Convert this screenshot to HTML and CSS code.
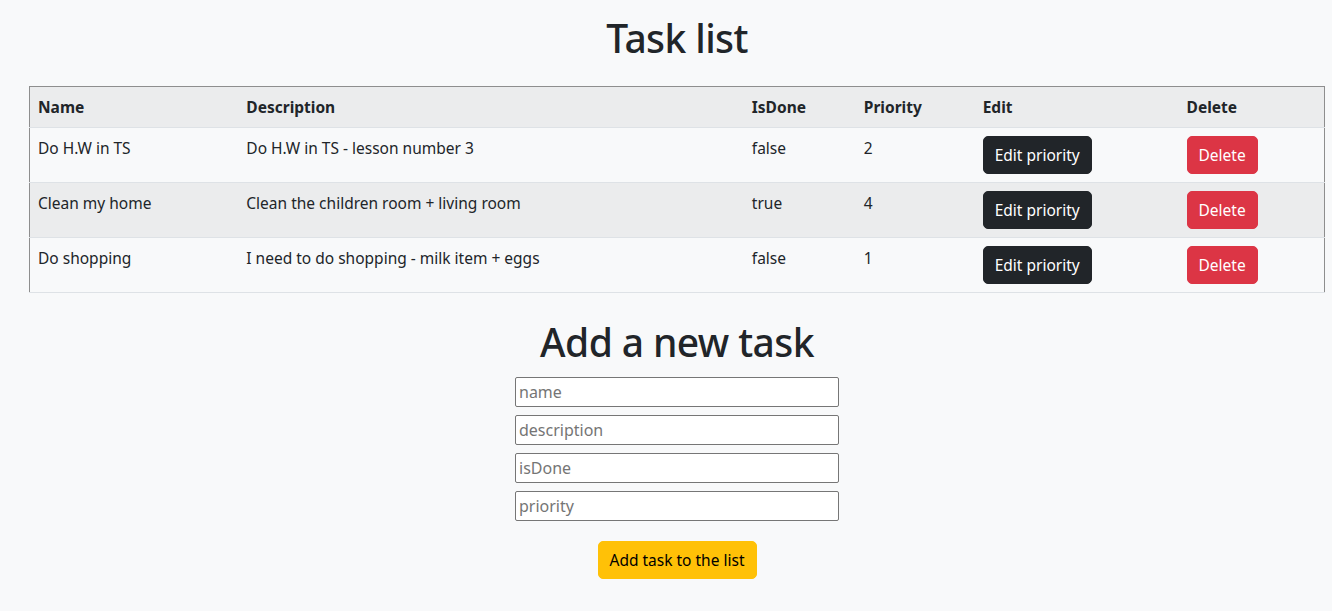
FILE: index.html
```html
<!DOCTYPE html>
<html lang="en">
<head>
<meta charset="utf-8">
<title>Task list</title>
<link rel="stylesheet" href="styles.css">
</head>
<body>
<div class="page">
  <h1 class="title">Task list</h1>
  <table class="tasks">
    <colgroup>
      <col class="c-name"><col class="c-desc"><col class="c-done"><col class="c-prio"><col class="c-edit"><col class="c-del">
    </colgroup>
    <thead>
      <tr><th>Name</th><th>Description</th><th>IsDone</th><th>Priority</th><th>Edit</th><th>Delete</th></tr>
    </thead>
    <tbody>
      <tr>
        <td>Do H.W in TS</td><td>Do H.W in TS - lesson number 3</td><td>false</td><td>2</td>
        <td><button class="btn btn-dark">Edit priority</button></td>
        <td><button class="btn btn-danger">Delete</button></td>
      </tr>
      <tr class="alt">
        <td>Clean my home</td><td>Clean the children room + living room</td><td>true</td><td>4</td>
        <td><button class="btn btn-dark">Edit priority</button></td>
        <td><button class="btn btn-danger">Delete</button></td>
      </tr>
      <tr>
        <td>Do shopping</td><td>I need to do shopping - milk item + eggs</td><td>false</td><td>1</td>
        <td><button class="btn btn-dark">Edit priority</button></td>
        <td><button class="btn btn-danger">Delete</button></td>
      </tr>
    </tbody>
  </table>
  <h1 class="subtitle">Add a new task</h1>
  <form class="add-form">
    <input class="field" type="text" placeholder="name">
    <input class="field" type="text" placeholder="description">
    <input class="field" type="text" placeholder="isDone">
    <input class="field" type="text" placeholder="priority">
    <button type="button" class="btn btn-warning">Add task to the list</button>
  </form>
</div>
</body>
</html>
```
FILE: styles.css
```css
html, body {
  margin: 0;
  background: #f8f9fa;
  color: #212529;
  font-family: "Noto Sans", "Open Sans", sans-serif;
  font-size: 15.5px;
  line-height: 24px;
}

.page {
  padding: 0 7px 20px 29px;
}

.title,
.subtitle {
  font-size: 39px;
  font-weight: 500;
  letter-spacing: -0.6px;
  line-height: 48px;
  text-align: center;
  margin: 0;
}

.title {
  padding-top: 14px;
  margin-bottom: 24px;
}

.subtitle {
  margin-top: 25px;
  margin-bottom: 11px;
}

.tasks {
  width: 1296px;
  border-collapse: collapse;
  border: 1px solid #8e8e8e;
  border-bottom-color: #dee2e6;
  vertical-align: top;
}

.c-name { width: 209px; }
.c-desc { width: 506px; }
.c-done { width: 112px; }
.c-prio { width: 119px; }
.c-edit { width: 204px; }
.c-del { width: 146px; }

.tasks th,
.tasks td {
  padding: 8px;
  text-align: left;
  border-bottom: 1px solid #dee2e6;
  vertical-align: top;
}

.tasks th {
  font-weight: 700;
  vertical-align: bottom;
}

.tasks thead tr,
.tasks tr.alt {
  background: #ebeced;
}

.btn {
  font-family: inherit;
  font-size: 15.5px;
  line-height: 24px;
  padding: 6px 11px;
  border: 1px solid transparent;
  border-radius: 5px;
  cursor: pointer;
}

.btn-dark {
  background: #212529;
  border-color: #212529;
  color: #fff;
}

.btn-danger {
  background: #dc3545;
  border-color: #dc3545;
  color: #fff;
}

.btn-warning {
  background: #ffc107;
  border-color: #ffc107;
  color: #000;
}

.add-form {
  display: flex;
  flex-direction: column;
  align-items: center;
  gap: 8px;
}

.field {
  box-sizing: border-box;
  width: 324px;
  height: 30px;
  padding: 1px 3px;
  border: 1px solid #767676;
  border-radius: 2px;
  background: #fff;
  font-family: inherit;
  font-size: 16px;
  color: #212529;
}

.field::placeholder {
  color: #757575;
}

.add-form .btn-warning {
  margin-top: 12px;
}
```
